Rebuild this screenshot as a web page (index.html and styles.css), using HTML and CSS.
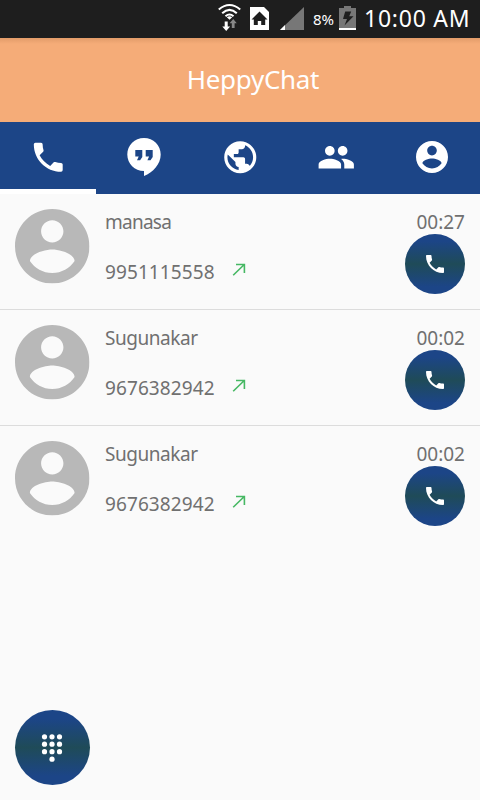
FILE: index.html
```html
<!DOCTYPE html>
<html lang="en">
<head>
<meta charset="utf-8">
<title>HeppyChat</title>
<link rel="stylesheet" href="styles.css">
</head>
<body>
<svg class="defs" aria-hidden="true">
  <symbol id="phone" viewBox="0 0 24 24"><path d="M6.62 10.79c1.44 2.83 3.76 5.14 6.59 6.59l2.2-2.2c.27-.27.67-.36 1.02-.24 1.12.37 2.33.57 3.57.57.55 0 1 .45 1 1V20c0 .55-.45 1-1 1-9.39 0-17-7.61-17-17 0-.55.45-1 1-1h3.5c.55 0 1 .45 1 1 0 1.25.2 2.45.57 3.57.11.35.03.74-.25 1.02l-2.2 2.2z"/></symbol>
  <symbol id="person" viewBox="2 2 20 20"><path d="M12 2C6.48 2 2 6.48 2 12s4.48 10 10 10 10-4.48 10-10S17.52 2 12 2zm0 3c1.66 0 3 1.34 3 3s-1.34 3-3 3-3-1.34-3-3 1.34-3 3-3zm0 14.2c-2.5 0-4.71-1.28-6-3.22.03-1.99 4-3.08 6-3.08 1.99 0 5.97 1.09 6 3.08-1.29 1.94-3.5 3.22-6 3.22z"/></symbol>
  <symbol id="outgoing" viewBox="0 0 14 14"><path d="M1.2 12.3 12 1.8M4 1.5h8.4v8.4" fill="none" stroke="#46b863" stroke-width="1.6"/></symbol>
</svg>
<div class="status">
  <svg class="status-icons" viewBox="0 0 90 38">
    <g fill="none" stroke="#fff" stroke-width="2.1"><path d="M.8 9.5Q11.5.5 22.2 9.5M4.2 13.2Q11.5 6.6 18.8 13.2M7.5 16.3Q11.5 12.7 15.5 16.3"/></g>
    <path fill="#fff" d="m8.8 17.2 2.7 2.6 2.7-2.6q-2.7-1.8-5.4 0zM6.7 21.5h3v5h2.4L8.2 31l-3.9-4.5h2.4z"/>
    <path fill="#888" d="m15.2 19 3.6 4.3h-2.2V28h-2.8v-4.7h-2.2z"/>
    <path fill="#fff" d="M32 7h14l5 5v18H32z"/>
    <path fill="#1e1e1e" d="m41.5 11.500 8 8h-2.300v5.500h-4v-4h-3.400v4h-4v-5.500h-2.300z"/>
    <path fill="#777" d="M86 7v23H62z"/><path fill="#fff" d="M67 25v5h-5z"/>
  </svg>
  <span class="percent">8%</span>
  <svg class="battery" viewBox="0 0 18 24"><path fill="#777" d="M0 2h5V0h7v2h5v20H0z"/><path fill="#fff" d="M0 22h17v2H0z"/><path fill="#1e1e1e" d="M6.2 5.5h6l-2 4.8h4.3L5.5 19.6 8 13H4z"/></svg>
  <span class="clock">10:00 AM</span>
</div>
<header class="header"><h1 class="title">HeppyChat</h1></header>
<nav class="tabs">
  <a class="tab active"><svg class="icon"><use href="#phone"/></svg></a>
  <a class="tab"><svg class="quote" viewBox="0 0 34 38"><path fill-rule="evenodd" d="M17 0C7.600 0 .3 7.300.3 16.500S7.600 33 17 33v5c9-3.500 16.700-12 16.700-21.500C33.700 7.300 26.400 0 17 0zM8.300 12h7v7l-2.200 3.200H10l1.700-3.700H8.300zM18.700 12h7v7l-2.200 3.200h-3.100l1.700-3.700h-3.400z"/></svg></a>
  <a class="tab"><svg class="icon" viewBox="0 0 24 24"><path d="M12 2C6.48 2 2 6.480 2 12s4.480 10 10 10 10-4.480 10-10S17.520 2 12 2zm-1 17.930c-3.950-.490-7-3.850-7-7.930 0-.620.080-1.210.210-1.790L9 15v1c0 1.100.900 2 2 2v1.930zm6.900-2.540c-.260-.810-1-1.390-1.900-1.390h-1v-3c0-.550-.450-1-1-1H8v-2h2c.550 0 1-.450 1-1V7h2c1.100 0 2-.900 2-2v-.410c2.930 1.190 5 4.060 5 7.410 0 2.080-.800 3.970-2.100 5.390z"/></svg></a>
  <a class="tab"><svg class="icon" viewBox="0 0 24 24"><path d="M16 11c1.660 0 2.990-1.340 2.990-3S17.660 5 16 5c-1.660 0-3 1.340-3 3s1.340 3 3 3zm-8 0c1.660 0 2.990-1.340 2.990-3S9.660 5 8 5C6.340 5 5 6.340 5 8s1.340 3 3 3zm0 2c-2.330 0-7 1.170-7 3.500V19h14v-2.500c0-2.330-4.670-3.500-7-3.500zm8 0c-.290 0-.620.020-.970.050 1.160.840 1.970 1.970 1.970 3.450V19h6v-2.500c0-2.330-4.670-3.500-7-3.500z"/></svg></a>
  <a class="tab"><svg class="account"><use href="#person"/></svg></a>
</nav>
<main class="calls">
  <article class="call">
    <svg class="avatar"><use href="#person"/></svg>
    <div class="info"><div class="name manasa">manasa</div><div class="line"><span class="number">9951115558</span><svg class="arrow"><use href="#outgoing"/></svg></div></div>
    <div class="side"><span class="duration">00:27</span><button class="round dial"><svg><use href="#phone"/></svg></button></div>
  </article>
  <article class="call">
    <svg class="avatar"><use href="#person"/></svg>
    <div class="info"><div class="name">Sugunakar</div><div class="line"><span class="number">9676382942</span><svg class="arrow"><use href="#outgoing"/></svg></div></div>
    <div class="side"><span class="duration">00:02</span><button class="round dial"><svg><use href="#phone"/></svg></button></div>
  </article>
  <article class="call">
    <svg class="avatar"><use href="#person"/></svg>
    <div class="info"><div class="name">Sugunakar</div><div class="line"><span class="number">9676382942</span><svg class="arrow"><use href="#outgoing"/></svg></div></div>
    <div class="side"><span class="duration">00:02</span><button class="round dial"><svg><use href="#phone"/></svg></button></div>
  </article>
</main>
<footer class="footer"><button class="round keypad"><svg viewBox="0 0 20 28"><g><circle cx="2.500" cy="2.800" r="2.600"/><circle cx="10" cy="2.800" r="2.600"/><circle cx="17.500" cy="2.800" r="2.600"/><circle cx="2.500" cy="10.200" r="2.600"/><circle cx="10" cy="10.200" r="2.600"/><circle cx="17.500" cy="10.200" r="2.600"/><circle cx="2.500" cy="17.700" r="2.600"/><circle cx="10" cy="17.700" r="2.600"/><circle cx="17.500" cy="17.700" r="2.600"/><circle cx="10" cy="25.200" r="2.600"/></g></svg></button></footer>
</body>
</html>
```
FILE: styles.css
```css
* { box-sizing: border-box; }
body { margin: 0; width: 480px; height: 800px; overflow: hidden; display: flex; flex-direction: column; background: #fafafa; font-family: "Noto Sans", "Open Sans", sans-serif; }
svg { display: block; overflow: visible; flex: none; }
.defs { position: absolute; width: 0; height: 0; }
.status { height: 38px; flex: none; display: flex; background: #1e1e1e; color: #fff; padding-left: 218px; white-space: nowrap; }
.status-icons { width: 90px; height: 38px; }
.percent { width: 26px; padding-left: 5px; font-size: 15px; line-height: 39px; letter-spacing: -.2px; }
.battery { width: 18px; height: 24px; margin: 6px 0 0 5px; }
.clock { margin-left: 7px; font-size: 23px; line-height: 37px; letter-spacing: .75px; }
.header { height: 84px; flex: none; background: linear-gradient(#e29c69, #f5ac78 6px); display: flex; justify-content: center; padding-left: 26px; }
.title { margin: 0; color: #fff; font-size: 26px; font-weight: 400; line-height: 83px; letter-spacing: -.3px; }
.tabs { height: 72px; flex: none; display: grid; grid-template-columns: repeat(5, 1fr); background: #1c4587; }
.tab { display: flex; align-items: flex-start; justify-content: center; padding-top: 15.500px; fill: #fff; }
.active { border-bottom: 5px solid #fff; }
.icon { width: 38.500px; height: 38.500px; }
.quote { width: 34px; height: 38px; margin-top: .5px; }
.account { width: 32px; height: 32px; margin-top: 3.500px; }
.call { height: 116px; display: flex; padding: 15px 15px 0; border-bottom: 1px solid #dcdcdc; color: #707070; font-size: 19px; }
.call:last-child { border-bottom: 0; }
.avatar { width: 74.500px; height: 74.500px; fill: #b8b8b8; }
.info { margin-left: 15.500px; flex: 1; line-height: 27px; }
.name { height: 50px; letter-spacing: -.45px; }
.manasa { letter-spacing: -.75px; }
.number { letter-spacing: .1px; }
.line { display: flex; }
.arrow { width: 14px; height: 14px; margin: 3.500px 0 0 17px; }
.side { width: 60px; display: flex; flex-direction: column; align-items: flex-end; }
.duration { height: 25px; line-height: 27px; }
.round { flex: none; border: 0; padding: 0; border-radius: 50%; display: flex; align-items: center; justify-content: center; background: linear-gradient(#1c4587 12%, #1f4b58 50%, #1c4587 88%); fill: #fff; }
.dial { width: 60px; height: 60px; }
.dial svg { width: 24px; height: 24px; }
.footer { margin-top: auto; padding: 0 15px 15px; }
.keypad { width: 75px; height: 75px; }
.keypad svg { width: 20px; height: 28px; margin-right: 1px; }
```
